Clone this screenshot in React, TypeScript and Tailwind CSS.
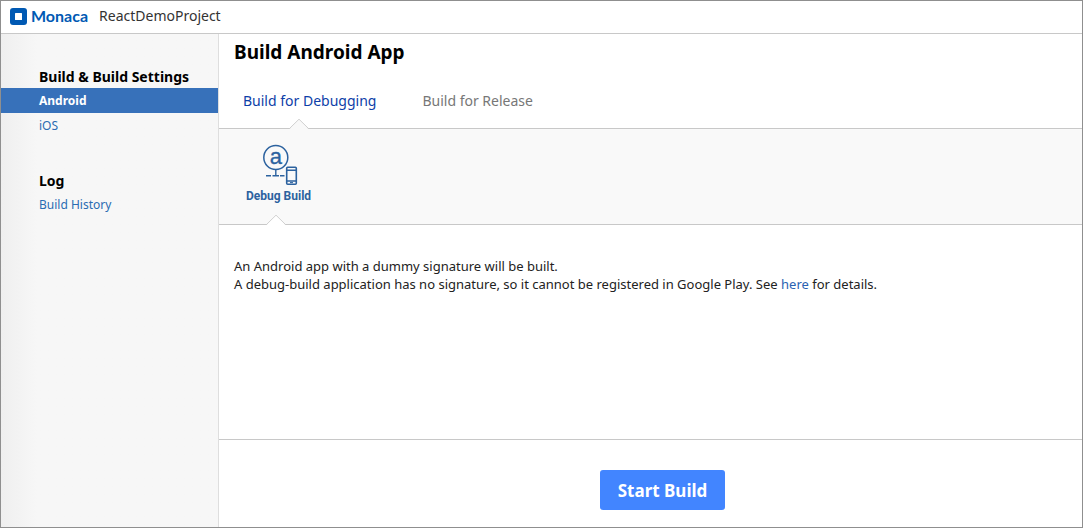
import React from 'react';

function Notch({ className }: { className: string }) {
  return (
    <svg className={`absolute -bottom-px ${className}`} width="20" height="11" viewBox="0 0 20 11" aria-hidden="true">
      <path d="M1 11V10.5L10 1.5L19 10.5V11Z" className="fill-current" />
      <path d="M0.5 10.5L10 1.2L19.5 10.5" fill="none" stroke="#d0d0d0" />
    </svg>
  );
}

function Logo() {
  return (
    <a href="#home" className="flex items-center gap-1 text-[#0059b3]">
      <svg width="17" height="17" viewBox="0 0 17 17" aria-hidden="true">
        <rect width="17" height="17" rx="3" fill="#0059b3" />
        <rect x="5" y="5" width="7" height="7" rx="0.5" fill="#fff" />
      </svg>
      <span className="font-[Lato,sans-serif] text-base leading-5 font-bold">Monaca</span>
    </a>
  );
}

function DebugBuildIcon() {
  return (
    <svg width="36" height="42" viewBox="0 0 36 42" fill="none" stroke="#2c629f" aria-hidden="true">
      <circle cx="13.8" cy="13.5" r="12" strokeWidth="1.5" />
      <text x="13.8" y="19.5" textAnchor="middle" fontSize="22" fill="#2c629f" stroke="#2c629f" strokeWidth="0.3" className="font-['Liberation_Sans',Arial,sans-serif] font-normal">a</text>
      <path d="M13.8 25.5V31.5M4 31.8h5M10.5 31.8h6.500M18 31.8h4.500" strokeWidth="1.4" />
      <rect x="24.7" y="23.2" width="9.6" height="17" rx="1" strokeWidth="1.6" />
      <path d="M25 26.3h9M25 37h9" strokeWidth="1.4" />
      <path d="M28 38.6h3" />
    </svg>
  );
}

export default function App() {
  return (
    <div className="flex min-h-screen flex-col border border-[#8f8f8f] bg-white font-['Noto_Sans',sans-serif] text-[13px] text-[#222]">
      <header className="flex h-[33px] items-center gap-[11px] border-b border-[#c8c8c8] px-[9px] pb-0.5">
        <Logo />
        <span className="text-sm leading-5 text-[#333]">ReactDemoProject</span>
      </header>

      <div className="flex flex-1">
        <nav className="w-[218px] shrink-0 border-r border-[#dedede] bg-linear-to-r from-[#efefef] to-[#f7f7f7] to-[36px] pt-8">
          <h2 className="pl-[38px] text-sm leading-[22px] font-bold text-black">Build &amp; Build Settings</h2>
          <a href="#android" aria-current="page" className="block bg-[#3771ba] pl-[38px] text-xs leading-[25px] font-bold text-white">Android</a>
          <a href="#ios" className="block pl-[38px] text-xs leading-[25px] text-[#2a6cb2]">iOS</a>
          <h2 className="mt-8 pl-[38px] text-sm leading-[22px] font-bold text-black">Log</h2>
          <a href="#history" className="block pl-[38px] text-xs leading-[25px] text-[#2a6cb2]">Build History</a>
        </nav>

        <main className="flex min-w-0 flex-1 flex-col">
          <h1 className="px-[15px] pt-1.5 text-[19px] leading-6 font-bold text-black">Build Android App</h1>

          <div role="tablist" className="relative flex gap-[46px] border-b border-[#c8c8c8] px-6 pt-[26px] pb-4 text-sm leading-[22px]">
            <button type="button" role="tab" aria-selected="true" className="text-[#0d3ea8]">Build for Debugging</button>
            <button type="button" role="tab" aria-selected="false" className="text-[#777]">Build for Release</button>
            <Notch className="left-[70px] text-[#f9f9f9]" />
          </div>

          <div className="relative flex border-b border-[#c8c8c8] bg-[#f9f9f9] px-[27px] pt-[15px] pb-[19px]">
            <button type="button" className="flex flex-col items-start text-xs leading-[18px] font-bold text-[#2c629f]">
              <span className="pb-px pl-4"><DebugBuildIcon /></span>
              <span className="font-[Roboto,sans-serif]">Debug Build</span>
            </button>
            <Notch className="left-[47px] text-white" />
          </div>

          <p className="flex-1 px-[15px] pt-8 pb-8 leading-[18px]">
            An Android app with a dummy signature will be built.<br />
            A debug-build application has no signature, so it cannot be registered in Google Play. See{' '}
            <a href="#details" className="text-[#2a62b2]">here</a> for details.
          </p>

          <div className="flex justify-center border-t border-[#c8c8c8] pt-[30px] pb-[17px] pl-6">
            <button type="button" className="h-10 rounded-[3px] bg-[#4285ff] px-[18px] pt-px text-[17px] leading-6 font-bold text-white">Start Build</button>
          </div>
        </main>
      </div>
    </div>
  );
}
